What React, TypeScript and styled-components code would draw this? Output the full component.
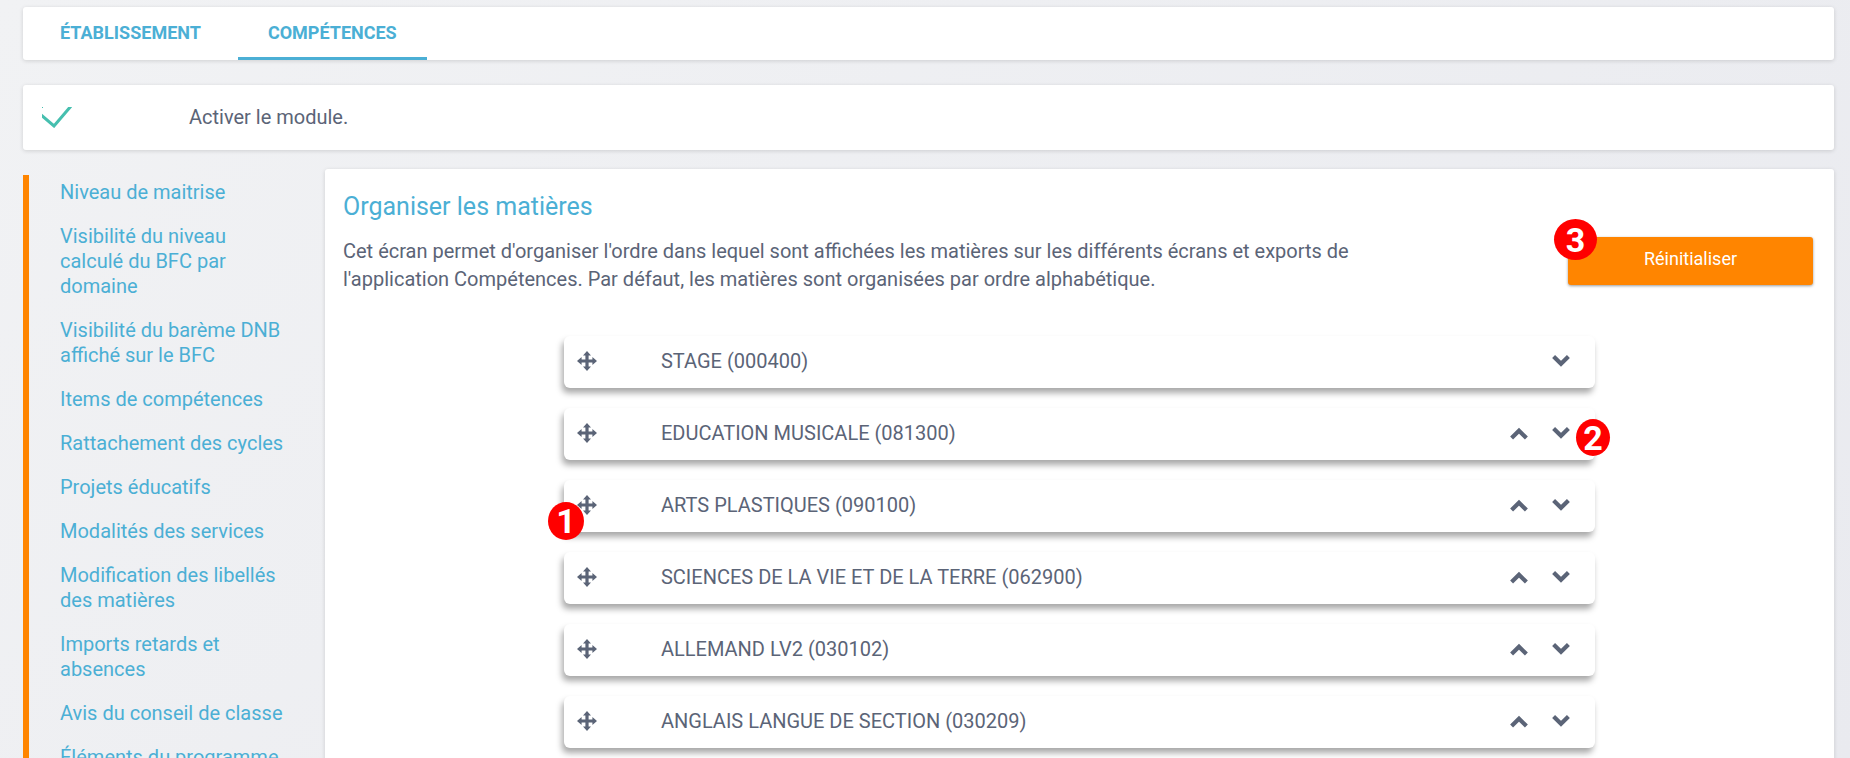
import React from 'react';
import styled, { createGlobalStyle } from 'styled-components';

const Global = createGlobalStyle`
  * { box-sizing: border-box; }
  html, body { margin: 0; min-height: 100%; }
  html { background: linear-gradient(135deg, #f1f2f4, #e9eaef) fixed; }
  body {
    height: 100vh;
    overflow: hidden;
    font-family: Roboto, "Liberation Sans", sans-serif;
    font-size: 20px;
    color: #5b6477;
  }
`;

const Page = styled.div`
  padding: 7px 16px 0 23px;
`;

const Card = styled.section`
  background: #fff;
  border-radius: 3px;
  box-shadow: 0 1px 4px rgba(0, 0, 0, 0.14);
`;

const TabBar = styled(Card).attrs({ as: 'nav' })`
  display: flex;
  gap: 7px;
  height: 53px;
  padding-left: 7px;
  margin-bottom: 25px;
`;

const Tab = styled.a<{ $active?: boolean }>`
  padding: 15px 30px 0;
  border-bottom: 3px solid ${p => (p.$active ? '#4bafd5' : 'transparent')};
  color: #4bafd5;
  font-size: 18px;
  font-weight: 700;
  line-height: 22px;
  text-decoration: none;
  text-transform: uppercase;
`;

const ModuleCard = styled(Card)`
  display: flex;
  align-items: center;
  height: 65px;
  margin-bottom: 19px;
  padding: 0 19px 2px;
`;

const ModuleLabel = styled.label`
  display: flex;
  align-items: center;
`;

const HiddenCheck = styled.input`
  position: absolute;
  opacity: 0;
  width: 30px;
  height: 21px;
  margin: 0;
`;

const CheckMark = styled.svg`
  width: 30px;
  height: 21px;
  margin: 2px 117px 0 0;
`;

const Columns = styled.div`
  display: flex;
  align-items: flex-start;
`;

const Sidebar = styled.nav`
  flex: 0 0 278px;
  margin: 6px 24px 0 0;
  padding: 5px 16px 0 31px;
  border-left: 6px solid #ff8500;
`;

const Menu = styled.ul`
  display: flex;
  flex-direction: column;
  gap: 19px;
  list-style: none;
  margin: 0;
  padding: 0;
`;

const MenuLink = styled.a`
  display: block;
  color: #4bafd5;
  line-height: 25px;
  text-decoration: none;
`;

const Content = styled(Card).attrs({ as: 'main' })`
  flex: 1;
  padding: 22px 18px 40px;
`;

const Title = styled.h1`
  margin: 0 0 14px;
  color: #4bafd5;
  font-size: 25px;
  font-weight: 400;
  line-height: 32px;
`;

const Intro = styled.div`
  display: flex;
  justify-content: space-between;
  align-items: flex-start;
  margin-bottom: 43px;
  padding-right: 3px;
`;

const Text = styled.p`
  width: 70%;
  margin: 0;
  line-height: 28px;
`;

const ResetButton = styled.button`
  position: relative;
  width: 245px;
  height: 48px;
  padding: 0 0 5px;
  border: 0;
  border-radius: 3px;
  background: #ff8500;
  box-shadow: 0 1px 3px rgba(0, 0, 0, 0.4);
  color: #fff;
  font: 400 18px Roboto, sans-serif;
`;

const Subjects = styled.ol`
  display: flex;
  flex-direction: column;
  gap: 20px;
  list-style: none;
  width: 70%;
  margin: 0 auto;
  padding: 0;
`;

const Subject = styled.li`
  position: relative;
  display: flex;
  align-items: center;
  height: 52px;
  padding: 0 25px 2px 13px;
  border-radius: 6px;
  background: #fff;
  box-shadow: -2px 5px 6px rgba(0, 0, 0, 0.34);
`;

const IconButton = styled.button`
  display: flex;
  padding: 0;
  border: 0;
  background: none;
  color: #5b6477;
`;

const SubjectName = styled.span`
  flex: 1;
  margin-left: 64px;
`;

const Moves = styled.div`
  display: flex;
  gap: 24px;
`;

const Marker = styled.span<{ $left?: string; $right?: string; $top: string; $w: number; $h: number }>`
  position: absolute;
  z-index: 1;
  top: ${p => p.$top};
  left: ${p => p.$left ?? 'auto'};
  right: ${p => p.$right ?? 'auto'};
  display: flex;
  align-items: center;
  justify-content: center;
  width: ${p => p.$w}px;
  height: ${p => p.$h}px;
  border-radius: 50%;
  background: #f00;
  color: #fff;
  font: 700 34px Roboto, sans-serif;
`;

const MoveIcon = () => (
  <svg width="20" height="20" viewBox="0 0 20 20" fill="currentColor" aria-hidden="true">
    <path d="M10 0 L14 4.6 H11.6 V8.4 H15.4 V6 L20 10 L15.4 14 V11.6 H11.6 V15.4 H14 L10 20 L6 15.4 H8.4 V11.6 H4.6 V14 L0 10 L4.6 6 V8.4 H8.4 V4.6 H6 Z" />
  </svg>
);

const Chevron = ({ up }: { up?: boolean }) => (
  <svg width="18" height="14" viewBox="0 0 18 14" fill="none" stroke="currentColor" strokeWidth="4.2" aria-hidden="true">
    <path d={up ? 'M1.6 12 L9 4.8 L16.4 12' : 'M1.6 2.6 L9 9.8 L16.4 2.6'} />
  </svg>
);

const menu = [
  'Niveau de maitrise',
  'Visibilité du niveau calculé du BFC par domaine',
  'Visibilité du barème DNB affiché sur le BFC',
  'Items de compétences',
  'Rattachement des cycles',
  'Projets éducatifs',
  'Modalités des services',
  'Modification des libellés des matières',
  'Imports retards et absences',
  'Avis du conseil de classe',
  'Éléments du programme',
];

const subjects = [
  'STAGE (000400)',
  'EDUCATION MUSICALE (081300)',
  'ARTS PLASTIQUES (090100)',
  'SCIENCES DE LA VIE ET DE LA TERRE (062900)',
  'ALLEMAND LV2 (030102)',
  'ANGLAIS LANGUE DE SECTION (030209)',
];

export default function App() {
  return (
    <Page>
      <Global />
      <TabBar>
        <Tab href="#etablissement">Établissement</Tab>
        <Tab href="#competences" $active>Compétences</Tab>
      </TabBar>
      <ModuleCard>
        <ModuleLabel>
          <HiddenCheck type="checkbox" defaultChecked />
          <CheckMark viewBox="0 0 30 21" aria-hidden="true">
            <path d="M-2 7 L12 19 L29 -1" fill="none" stroke="#46bfaf" strokeWidth="3" />
            <rect width="1" height="1" fill="#46bfaf" />
          </CheckMark>
          Activer le module.
        </ModuleLabel>
      </ModuleCard>
      <Columns>
        <Sidebar>
          <Menu>
            {menu.map(item => (
              <li key={item}><MenuLink href="#">{item}</MenuLink></li>
            ))}
          </Menu>
        </Sidebar>
        <Content>
          <Title>Organiser les matières</Title>
          <Intro>
            <Text>
              Cet écran permet d'organiser l'ordre dans lequel sont affichées les matières sur les
              différents écrans et exports de l'application Compétences. Par défaut, les matières
              sont organisées par ordre alphabétique.
            </Text>
            <ResetButton type="button">
              Réinitialiser
              <Marker $left="-14px" $top="-18px" $w={43} $h={41}>3</Marker>
            </ResetButton>
          </Intro>
          <Subjects>
            {subjects.map((name, i) => (
              <Subject key={name}>
                <IconButton type="button" aria-label={'Déplacer ' + name}><MoveIcon /></IconButton>
                <SubjectName>{name}</SubjectName>
                <Moves>
                  {i > 0 && (
                    <IconButton type="button" aria-label="Monter"><Chevron up /></IconButton>
                  )}
                  <IconButton type="button" aria-label="Descendre"><Chevron /></IconButton>
                </Moves>
                {i === 1 && <Marker $right="-15px" $top="11px" $w={34} $h={37}>2</Marker>}
                {i === 2 && <Marker $left="-16px" $top="22px" $w={36} $h={38}>1</Marker>}
              </Subject>
            ))}
          </Subjects>
        </Content>
      </Columns>
    </Page>
  );
}
